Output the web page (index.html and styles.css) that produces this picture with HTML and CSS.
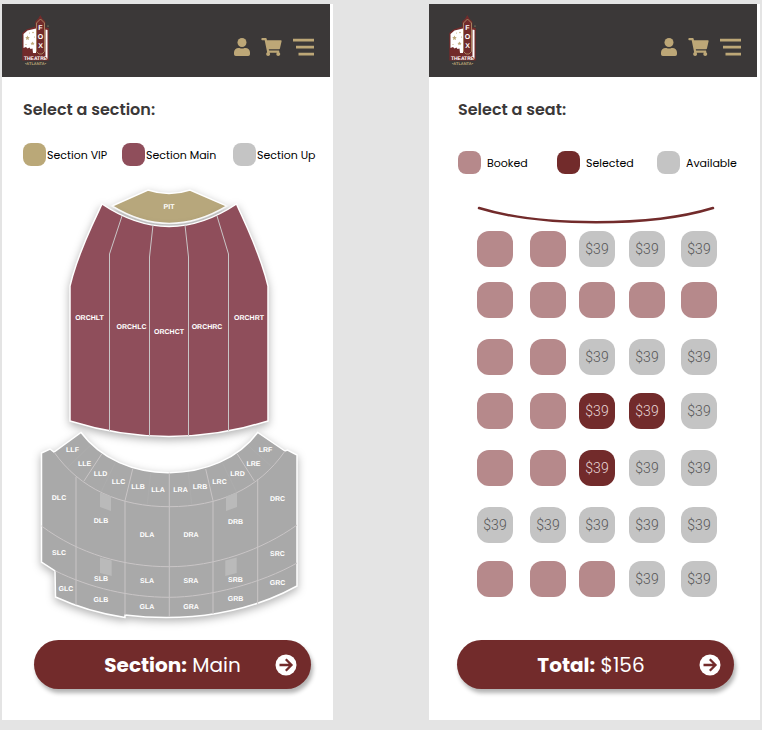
FILE: index.html
```html
<!DOCTYPE html>
<html lang="en">
<head>
<meta charset="utf-8">
<meta name="viewport" content="width=device-width, initial-scale=1">
<title>Fox Theatre Atlanta – Tickets</title>
<link rel="stylesheet" href="styles.css">
</head>
<body>
<svg class="defs" aria-hidden="true">
  <symbol id="logo" viewBox="22 15 28 52" overflow="visible">
    <path fill="#722b2b" d="M22.300 60.500V33l4-3.500 9-3v-5l3-3 2-3.500 2 3.500 3 3v6l3.500 .5V60.500z"/>
    <path fill="#fff" d="M23.500 48V34l4-3.500 8.500-2V53h-3l-.5-4.500-2 .500-1-1.500-2 1-1.500-1.500zM45.500 29.500l2 .5V59l-2-2.500z"/>
    <path fill="#722b2b" stroke="#bda777" stroke-width=".7" d="M36.500 23l4-4 4 4v28.500l-2.500 2.500h-3L36.500 51.500z"/>
    <g fill="#bda777">
      <path d="M27.500 35.500l.7 1.500 1.600.2-1.200 1.100.4 1.700-1.500-.8-1.500.8.4-1.700-1.200-1.100 1.600-.2zM32.500 41.500l.6 1.200 1.400.2-1 1 .3 1.400-1.300-.7-1.300.7.3-1.400-1-1 1.400-.2z"/>
      <circle cx="33" cy="32.500" r=".8"/><circle cx="34.500" cy="37" r=".6"/><circle cx="26" cy="44.500" r=".6"/><circle cx="29.500" cy="33" r=".5"/><circle cx="48" cy="26" r=".6"/>
    </g>
    <g class="logo-fox" fill="#fff" text-anchor="middle"><text x="40.500" y="30">F</text><text x="40.500" y="39">O</text><text x="40.500" y="48">X</text></g>
    <text class="logo-theatre" x="35.500" y="59.500" text-anchor="middle" fill="#fff">THEATRE</text>
    <text class="logo-atlanta" x="35.500" y="64.500" text-anchor="middle" fill="#bda777">•ATLANTA•</text>
  </symbol>
  <symbol id="user" viewBox="0 0 16 18"><circle cx="8" cy="4.500" r="4.500"/><path d="M4.500 10h1q2.500 1.200 5 0h1a4.500 4.500 0 0 1 4.500 4.500v1.700q0 1.800-1.800 1.800H1.800Q0 18 0 16.200v-1.700A4.500 4.500 0 0 1 4.500 10z"/></symbol>
  <symbol id="cart" viewBox="0 0 576 512"><path d="M528.120 301.319l47.273-208C578.806 78.301 567.391 64 551.990 64H159.208l-9.166-44.810C147.758 8.021 137.930 0 126.529 0H24C10.745 0 0 10.745 0 24v16c0 13.255 10.745 24 24 24h69.883l70.248 343.435C147.325 417.100 136 435.222 136 456c0 30.928 25.072 56 56 56s56-25.072 56-56c0-15.674-6.447-29.835-16.824-40h209.647C430.447 426.165 424 440.326 424 456c0 30.928 25.072 56 56 56s56-25.072 56-56c0-22.172-12.888-41.332-31.579-50.405l5.517-24.276c3.413-15.018-8.002-29.319-23.403-29.319H218.117l-6.545-32h293.145c11.206 0 20.920-7.754 23.403-18.681z"/></symbol>
  <symbol id="menu" viewBox="0 0 21 18"><path d="M0 .8h21v2.700H0zM3 7.700h18v2.700H3zM5.500 14.800h15.500v2.700H5.500z"/></symbol>
  <symbol id="arrow" viewBox="0 0 22 22"><circle cx="11" cy="11" r="10.500" fill="#fff"/><path d="M4.500 11H16M10.800 5.300l5.700 5.700-5.700 5.700" fill="none" stroke="#722b2b" stroke-width="2.300"/></symbol>
</svg>

<main class="screens">
  <section class="screen">
    <header class="topbar">
      <a class="brand" href="#" aria-label="Fox Theatre Atlanta"><svg><use href="#logo"/></svg></a>
      <nav class="actions">
        <button class="icon-btn icon-user" aria-label="Account"><svg><use href="#user"/></svg></button>
        <button class="icon-btn" aria-label="Cart"><svg><use href="#cart"/></svg></button>
        <button class="icon-btn" aria-label="Menu"><svg><use href="#menu"/></svg></button>
      </nav>
    </header>
    <div class="intro intro-section">
      <h1>Select a section:</h1>
      <ul class="legend legend-section">
        <li><span class="swatch vip"></span>Section VIP</li>
        <li><span class="swatch main"></span>Section Main</li>
        <li><span class="swatch up"></span>Section Up</li>
      </ul>
    </div>
    <svg class="map" viewBox="2 180 331 450" role="img" aria-label="Theatre section map">
      <g class="block pit"><path d="M112 206L148 190Q169 197 190 190L227 206Q169 241 112 206z"/></g>
      <g class="block orchestra">
        <path d="M102 204Q169 249 236.500 204C243 219 260 252 268 286V421Q169 452 70 421V286C78 252 95 219 102 204z"/>
        <path class="line" d="M122 216L109.500 254V431M153 225L149.500 257V436M185 225L188.500 257V436M217 216L228.500 254V431"/>
      </g>
      <g class="block balcony">
        <path d="M41.500 453L50 449 54 452 81 432.500C101 459 134 473 169.300 472.700S238 459 257.700 432.500L285 451 287.500 450 297 455V586C250 612 190 623 125 615V617.500Q88 612 55.500 597L55 571 41.500 562z"/>
        <path class="line" d="M54 452C80 489 120 506.700 169.300 506.700S259 489 285 451M41.500 526C79 554 124 566.700 169.300 566.700S262 550 297 525M55 570.700C90 588 130 597.300 169.300 597.300S262 583 297 563M76 477V605M125 500.700V615M169.300 472.700V617M213 500.700V614M257.700 479V604M101.700 454L84 481M132.700 469L125 500.700M205.700 469L213 500.700M237.300 454L254.300 481"/>
        <path class="line faint" d="M90 445.700L68.300 466.700M115 463.300L100.700 492.700M150.700 472.300L147.300 504.300M188.300 472.300L191.700 504.300M222.700 463.300L236.700 492.700M248.300 445.700L271.700 466.700"/>
        <path class="booth" d="M100 492.500L111 496.500V511L100 507zM226 496.500L237 492.500V507L226 511zM100 557.500L111.700 560.500V576L100 573zM225.300 560.500L236.700 557.500V573L225.300 576z"/>
      </g>
      <g class="labels">
        <text x="169" y="209">PIT</text><text x="89.500" y="319.500">ORCHLT</text><text x="131.500" y="328.500">ORCHLC</text><text x="169" y="333.500">ORCHCT</text><text x="207" y="328.500">ORCHRC</text><text x="249" y="319.500">ORCHRT</text>
        <text x="72.500" y="452">LLF</text><text x="84.500" y="465.500">LLE</text><text x="100.500" y="475.500">LLD</text><text x="118.500" y="483.500">LLC</text><text x="138" y="489">LLB</text><text x="158" y="491.500">LLA</text>
        <text x="180.500" y="491.500">LRA</text><text x="200" y="489">LRB</text><text x="219.500" y="483.500">LRC</text><text x="237.500" y="475.500">LRD</text><text x="253.500" y="465.500">LRE</text><text x="265.500" y="452">LRF</text>
        <text x="59" y="499.500">DLC</text><text x="101" y="522.500">DLB</text><text x="147" y="536.500">DLA</text><text x="191" y="536.500">DRA</text><text x="235.500" y="523.500">DRB</text><text x="277.500" y="501">DRC</text>
        <text x="59" y="555">SLC</text><text x="101" y="581">SLB</text><text x="147" y="582.500">SLA</text><text x="191" y="582.500">SRA</text><text x="235.500" y="581.500">SRB</text><text x="277.500" y="556">SRC</text>
        <text x="66" y="590.500">GLC</text><text x="101" y="602">GLB</text><text x="147" y="608.500">GLA</text><text x="191" y="608.500">GRA</text><text x="235.500" y="600.500">GRB</text><text x="277.500" y="585">GRC</text>
      </g>
    </svg>
    <button class="cta cta-section"><span class="cta-text"><b>Section:</b> Main</span><svg><use href="#arrow"/></svg></button>
  </section>

  <section class="screen">
    <header class="topbar">
      <a class="brand" href="#" aria-label="Fox Theatre Atlanta"><svg><use href="#logo"/></svg></a>
      <nav class="actions">
        <button class="icon-btn icon-user" aria-label="Account"><svg><use href="#user"/></svg></button>
        <button class="icon-btn" aria-label="Cart"><svg><use href="#cart"/></svg></button>
        <button class="icon-btn" aria-label="Menu"><svg><use href="#menu"/></svg></button>
      </nav>
    </header>
    <div class="intro intro-seat">
      <h1>Select a seat:</h1>
      <ul class="legend legend-seat">
        <li><span class="swatch booked"></span>Booked</li>
        <li><span class="swatch selected"></span>Selected</li>
        <li><span class="swatch available"></span>Available</li>
      </ul>
    </div>
    <div class="hall">
      <svg class="stage" viewBox="0 0 240 20" role="img" aria-label="Stage"><path d="M2 4C64 23 174 23 236 4"/></svg>
      <div class="seats">
        <button class="seat booked" disabled aria-label="Booked"></button><button class="seat booked" disabled aria-label="Booked"></button><button class="seat available">$39</button><button class="seat available">$39</button><button class="seat available">$39</button>
        <button class="seat booked" disabled aria-label="Booked"></button><button class="seat booked" disabled aria-label="Booked"></button><button class="seat booked" disabled aria-label="Booked"></button><button class="seat booked" disabled aria-label="Booked"></button><button class="seat booked" disabled aria-label="Booked"></button>
        <button class="seat booked" disabled aria-label="Booked"></button><button class="seat booked" disabled aria-label="Booked"></button><button class="seat available">$39</button><button class="seat available">$39</button><button class="seat available">$39</button>
        <button class="seat booked" disabled aria-label="Booked"></button><button class="seat booked" disabled aria-label="Booked"></button><button class="seat selected" aria-pressed="true">$39</button><button class="seat selected" aria-pressed="true">$39</button><button class="seat available">$39</button>
        <button class="seat booked" disabled aria-label="Booked"></button><button class="seat booked" disabled aria-label="Booked"></button><button class="seat selected" aria-pressed="true">$39</button><button class="seat available">$39</button><button class="seat available">$39</button>
        <button class="seat available">$39</button><button class="seat available">$39</button><button class="seat available">$39</button><button class="seat available">$39</button><button class="seat available">$39</button>
        <button class="seat booked" disabled aria-label="Booked"></button><button class="seat booked" disabled aria-label="Booked"></button><button class="seat booked" disabled aria-label="Booked"></button><button class="seat available">$39</button><button class="seat available">$39</button>
      </div>
    </div>
    <button class="cta cta-total"><span class="cta-text"><b>Total:</b> $156</span><svg><use href="#arrow"/></svg></button>
  </section>
</main>
</body>
</html>
```
FILE: styles.css
```css
* { box-sizing: border-box; }

body {
  margin: 0;
  background: #e4e4e4;
  color: #000;
  font-family: Poppins, Inter, sans-serif;
}

button { margin: 0; padding: 0; border: 0; background: none; font: inherit; color: inherit; }
svg { display: block; }
.defs { position: absolute; width: 0; height: 0; }

.screens {
  display: grid;
  grid-template-columns: 1fr 1fr;
  gap: 96px;
  padding: 4px 2px 10px;
}
.screen { display: flex; flex-direction: column; background: #fff; padding-bottom: 31px; }

/* Top bar */
.topbar {
  display: flex;
  justify-content: space-between;
  align-items: flex-end;
  margin-right: 3px;
  padding: 11px 16px 10px 20px;
  background: #3b3838;
}
.brand svg { width: 28px; height: 52px; overflow: visible; }
.actions { display: flex; gap: 11px; padding-bottom: 11px; }
.icon-btn svg { width: 21px; height: 18px; fill: #bda777; }
.icon-user svg { width: 16px; }
.logo-fox { font: 700 7px "Liberation Sans", sans-serif; }
.logo-theatre { font: 700 5px "Liberation Sans", sans-serif; }
.logo-atlanta { font: 700 4px "Liberation Sans", sans-serif; }
.logo-fox, .logo-theatre, .logo-atlanta, .labels { text-rendering: geometricPrecision; }

/* Heading and legend */
.intro { padding-top: 21px; }
.intro-section { padding-left: 21px; padding-right: 18px; }
.intro-seat { padding-left: 29px; padding-right: 24px; }
h1 { margin: 0; font-size: 16px; line-height: 24px; font-weight: 600; color: #3b3838; }
.legend {
  display: grid;
  margin: 21px 0 0;
  padding: 0;
  list-style: none;
  font-size: 11px;
  line-height: 16px;
  white-space: nowrap;
}
.legend li { display: flex; align-items: center; gap: 1px; }
.legend-section { grid-template-columns: 99fr 111fr 82px; }
.legend-seat { grid-template-columns: 99fr 100fr 79px; margin-top: 29px; }
.legend-seat li { gap: 6px; }
.swatch { flex: none; width: 23px; height: 23px; border-radius: 8px; }

.vip { background: #baa878; }
.main { background: #8f4e5b; }
.up, .available { background: #c4c4c4; }
.booked { background: #b6898b; }
.selected { background: #722b2b; }

/* Section map */
.map { width: 100%; margin-top: 14px; overflow: visible; }
.block { stroke: #fff; stroke-width: 1.5; filter: drop-shadow(0 3px 4px rgba(0, 0, 0, .3)); }
.pit { fill: #b7a77c; }
.orchestra { fill: #8f4e5b; }
.balcony { fill: #a9a9a9; }
.line { fill: none; stroke: #c9c5c6; stroke-width: 1; }
.faint { stroke: #b1b1b1; stroke-width: .5; }
.booth { fill: #bababa; stroke: none; }
.labels { fill: #fff; font: 700 7px "Liberation Sans", sans-serif; text-anchor: middle; }

/* Seats */
.hall { padding: 30px 43px 0 48px; }
.stage { width: 100%; }
.stage path { fill: none; stroke: #722b2b; stroke-width: 2.5; stroke-linecap: round; }
.seats {
  display: grid;
  grid-template-columns: 53fr 49fr 50fr 52fr 36px;
  grid-template-rows: 51px 57px 54px 57px 57px 54px 36px;
  margin-top: 7px;
}
.seat {
  width: 36px;
  height: 36px;
  border-radius: 12px;
  color: #555;
  font: 300 14px/20px Roboto, sans-serif;
}
.seat.selected { color: #e8d8d8; }

/* Bottom button */
.cta {
  display: grid;
  grid-template-columns: 1fr auto 1fr;
  align-items: center;
  margin-top: auto;
  height: 49px;
  border-radius: 25px;
  background: #722b2b;
  box-shadow: 2px 4px 4px rgba(0, 0, 0, .3);
  color: #fff;
  font-size: 20px;
  line-height: 28px;
}
.cta-text { grid-column: 2; }
.cta svg { width: 22px; height: 22px; justify-self: end; }
.cta-section { margin-top: 10px; margin-left: 32px; margin-right: 22px; padding: 0 14px; }
.cta-total { margin-left: 28px; margin-right: 26px; padding: 0 13px 0 4px; }
```
